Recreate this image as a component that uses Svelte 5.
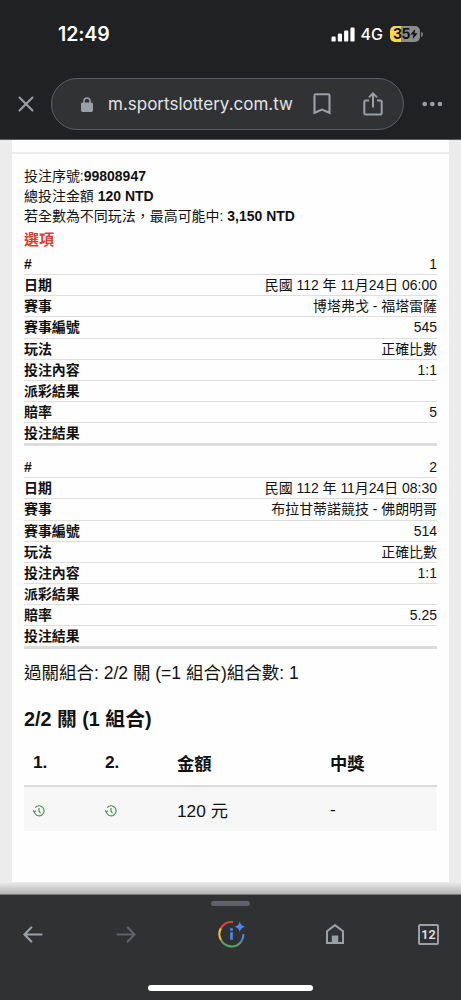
<script>
  const LABELS = ['#', '日期', '賽事', '賽事編號', '玩法', '投注內容', '派彩結果', '賠率', '投注結果'];

  const bets = [
    ['1', '民國 112 年 11月24日 06:00', '博塔弗戈 - 福塔雷薩', '545', '正確比數', '1:1', '', '5', ''],
    ['2', '民國 112 年 11月24日 08:30', '布拉甘蒂諾競技 - 佛朗明哥', '514', '正確比數', '1:1', '', '5.25', '']
  ];

  const signal = [5, 8, 11, 14];
</script>

<div class="phone">
  <header class="top">
    <div class="status">
      <span class="time">12:49</span>
      <div class="status-right">
        <svg class="signal" width="24" height="15" viewBox="0 0 24 15">
          {#each signal as h, i}
            <rect x={0.5 + i * 6.3} y={14.6 - h} width="4.2" height={h} rx="1.2" fill="#fff" />
          {/each}
        </svg>
        <span class="net">4G</span>
        <div class="battery">
          <span>35</span>
          <svg width="8" height="10" viewBox="0 0 8 10"><path d="M5.2 0 0.5 5.6h3L2.7 10 7.6 4.2h-3z" fill="#111" /></svg>
        </div>
        <i class="nub"></i>
      </div>
    </div>

    <div class="address">
      <svg class="close" width="16" height="16" viewBox="0 0 16 16"><path d="M1.5 1.5l13 13M14.5 1.5l-13 13" stroke="#9aa0a6" stroke-width="2" stroke-linecap="round" /></svg>
      <div class="pill">
        <svg class="lock" width="12" height="15" viewBox="0 0 12 15">
          <path d="M3 7V4a3 3 0 0 1 6 0v3" fill="none" stroke="#9aa0a6" stroke-width="1.5" />
          <rect x="0" y="5.5" width="12" height="9.5" rx="1.4" fill="#9aa0a6" />
        </svg>
        <span class="url">m.sportslottery.com.tw</span>
        <svg class="mark" width="18" height="22" viewBox="0 0 18 22"><path d="M1.5 19.8V2.4Q1.5 1.2 2.7 1.2h12.6q1.2 0 1.2 1.2v17.4L9 16.6z" fill="none" stroke="#9aa0a6" stroke-width="2.1" /></svg>
        <svg class="share" width="20" height="24" viewBox="0 0 20 24"><path d="M6 8.6H2.8Q1.3 8.6 1.3 10.1v11q0 1.5 1.5 1.5h14.4q1.5 0 1.5-1.5v-11q0-1.5-1.5-1.5H14M10 15.5V1.6M6 5.4l4-4 4 4" fill="none" stroke="#9aa0a6" stroke-width="2" /></svg>
      </div>
      <svg class="more" width="21" height="6" viewBox="0 0 21 6" fill="#9aa0a6"><circle cx="2.7" cy="3" r="2.3" /><circle cx="10.3" cy="3" r="2.3" /><circle cx="17.9" cy="3" r="2.3" /></svg>
    </div>
  </header>

  <main>
    <div class="strip"></div>
    <section class="slip">
      <div class="summary">
        <p>投注序號:<b>99808947</b></p>
        <p>總投注金額 <b>120 NTD</b></p>
        <p>若全數為不同玩法，最高可能中: <b>3,150 NTD</b></p>
      </div>
      <h4>選項</h4>

      {#each bets as bet}
        <dl>
          {#each LABELS as label, i}
            <div class="row"><dt>{label}</dt><dd>{bet[i]}</dd></div>
          {/each}
        </dl>
      {/each}

      <p class="combo">過關組合: 2/2 關 (=1 組合)組合數: 1</p>
      <h3>2/2 關 (1 組合)</h3>

      <div class="grid head">
        <span>1.</span><span>2.</span><span>金額</span><span>中獎</span>
      </div>
      <div class="grid body">
        {#each [1, 2] as n (n)}
          <span>
            <svg class="clock" width="12" height="12" viewBox="0 0 12 12" fill="none" stroke="#3f9142" stroke-width="1.1">
              <path d="M1.3 7.2A5 5 0 1 0 2.2 2.7M0 5.3l1.3 2 1.7-1.7M6 3v3.2l1.5 2" />
            </svg>
          </span>
        {/each}
        <span>120 元</span><span>-</span>
      </div>
    </section>
    <div class="fade"></div>
  </main>

  <footer>
    <div class="grip"></div>
    <nav>
      <svg width="20" height="17" viewBox="0 0 20 17"><path d="M18.5 8.5H1.5M8.3 1.6 1.4 8.5l6.9 6.9" fill="none" stroke="#9aa0a6" stroke-width="2.1" stroke-linecap="round" /></svg>
      <svg class="forward" width="20" height="17" viewBox="0 0 20 17"><path d="M1.5 8.5h17M11.7 1.6l6.9 6.9-6.9 6.9" fill="none" stroke="#606367" stroke-width="2.1" stroke-linecap="round" /></svg>
      <svg class="lens" width="28" height="28" viewBox="0 0 28 28" fill="none" stroke-width="2.1">
        <path d="M3 8.1A12 12 0 0 1 15 2.1" stroke="#db4437" />
        <path d="M3 8.1a12 12 0 0 0 0 12" stroke="#f4b93e" />
        <path d="M3 20.1a12 12 0 0 0 20 1.8" stroke="#58a55c" />
        <path d="M23 21.9a12 12 0 0 0 2.4-7.8" stroke="#4f86ec" />
        <path d="M13.5 12.3v7.5M13.5 8.3v2.4" stroke="#4f86ec" stroke-width="2.7" />
        <path d="M21.8 1.5q1 4.2 5.2 5.2-4.2 1-5.2 5.2-1-4.2-5.2-5.2 4.2-1 5.2-5.2z" fill="#4f86ec" />
      </svg>
      <svg class="home" width="18" height="20" viewBox="0 0 18 20"><path d="M1 19V7.3L9 1.1l8 6.2V19z" fill="none" stroke="#9aa0a6" stroke-width="2" /><path d="M5.8 11.5h6.4V20H5.8z" fill="#9aa0a6" /></svg>
      <div class="tabs">12</div>
    </nav>
    <div class="home-bar"></div>
  </footer>
</div>

<style>
  .phone {
    width: 461px;
    height: 1000px;
    display: flex;
    flex-direction: column;
    overflow: hidden;
    color: #111;
    font-family: "Liberation Sans", "Noto Sans CJK TC", sans-serif;
  }
  .phone, .phone * { box-sizing: border-box; }
  p, h3, h4, dl, dt, dd { margin: 0; }
  svg { display: block; flex: none; }

  .top {
    height: 140px;
    flex: none;
    background: #202123;
    border-bottom: 1px solid #5b5c5e;
  }
  .status {
    height: 78px;
    display: flex;
    justify-content: space-between;
    padding: 20px 38px 0 58px;
    color: #fff;
  }
  .time {
    font: 600 19.5px/28px Inter, sans-serif;
    letter-spacing: -0.1px;
  }
  .status-right { display: flex; align-items: center; height: 28px; }
  .net { font: 500 16px/24px Inter, sans-serif; margin: 0 7px 0 6px; }
  .battery {
    width: 30px;
    height: 16px;
    border-radius: 5px;
    background: linear-gradient(90deg, #f9d649 11px, #8b8b8b 11px);
    color: #111;
    font: 700 14px/16px Inter, sans-serif;
    letter-spacing: -0.5px;
    display: flex;
    align-items: center;
    padding-left: 3px;
  }
  .nub { width: 2px; height: 5px; margin-left: 1px; background: #777; border-radius: 0 2px 2px 0; }

  .address { display: flex; align-items: center; padding: 0 18px; }
  .pill {
    width: 353px;
    height: 52px;
    margin: 0 18px 0 17px;
    border: 1px solid #5c6064;
    border-radius: 26px;
    background: #303234;
    display: flex;
    align-items: center;
  }
  .lock { margin-left: 29px; }
  .url {
    width: 191px;
    margin: 0 14px 0 15px;
    color: #e3e4e6;
    font: 400 17px/24px Inter, sans-serif;
    white-space: nowrap;
  }
  .share { margin-left: 32px; }

  main {
    position: relative;
    height: 754px;
    padding: 0 12px;
    background: #ececec;
  }
  .strip { height: 12px; margin-bottom: 2px; background: #fefefe; }
  .slip { height: 728px; padding: 12px 12px 0; background: #fefefe; }
  .summary { font-size: 13.97px; line-height: 20px; white-space: nowrap; }
  h4 { color: #e03c31; font-size: 15px; line-height: 22px; margin: 3px 0; }

  dl { margin-bottom: 10px; border-bottom: 3px solid #dcdcdc; font-size: 13.95px; }
  .row {
    display: flex;
    justify-content: space-between;
    height: 21.13px;
    line-height: 21px;
    border-bottom: 1px solid #dedede;
  }
  .row:last-child { height: 20.13px; border-bottom: 0; }
  dl + dl { margin-top: 11px; }
  dt { font-weight: 700; }

  .combo { font-size: 17.5px; line-height: 24px; margin-top: 12px; white-space: nowrap; }
  h3 { font-size: 19.8px; line-height: 26px; margin-top: 21px; }
  .grid {
    display: grid;
    grid-template-columns: 72px 72px 153px 1fr;
    align-items: center;
    padding-left: 9px;
    font-size: 17.3px;
  }
  .head { height: 55px; padding-top: 8px; font-weight: 700; border-bottom: 2px solid #dadada; }
  .body { height: 44px; padding-top: 1px; background: #f7f7f7; }
  .clock { margin-top: 2px; }
  .fade {
    position: absolute;
    left: 0;
    right: 0;
    bottom: 0;
    height: 12px;
    background: linear-gradient(transparent, rgba(0, 0, 0, 0.24));
  }

  footer { height: 106px; background: #303133; border-top: 1px solid #77787a; }
  .grip { width: 39px; height: 5px; margin: 6px auto 0; border-radius: 3px; background: #60616a; }
  nav {
    display: flex;
    align-items: center;
    height: 56px;
    padding-left: 23px;
  }
  .forward { margin-left: 73px; }
  .lens { margin-left: 82px; }
  .home { margin-left: 80px; }
  .tabs {
    width: 21px;
    height: 21px;
    margin-left: 74px;
    border: 2px solid #9aa0a6;
    border-radius: 2px;
    color: #e3e4e6;
    font: 600 12.5px/18px Roboto, sans-serif;
    text-align: center;
  }
  .home-bar { width: 165px; height: 6px; margin: 23px auto 0; border-radius: 3px; background: #fff; }
</style>
